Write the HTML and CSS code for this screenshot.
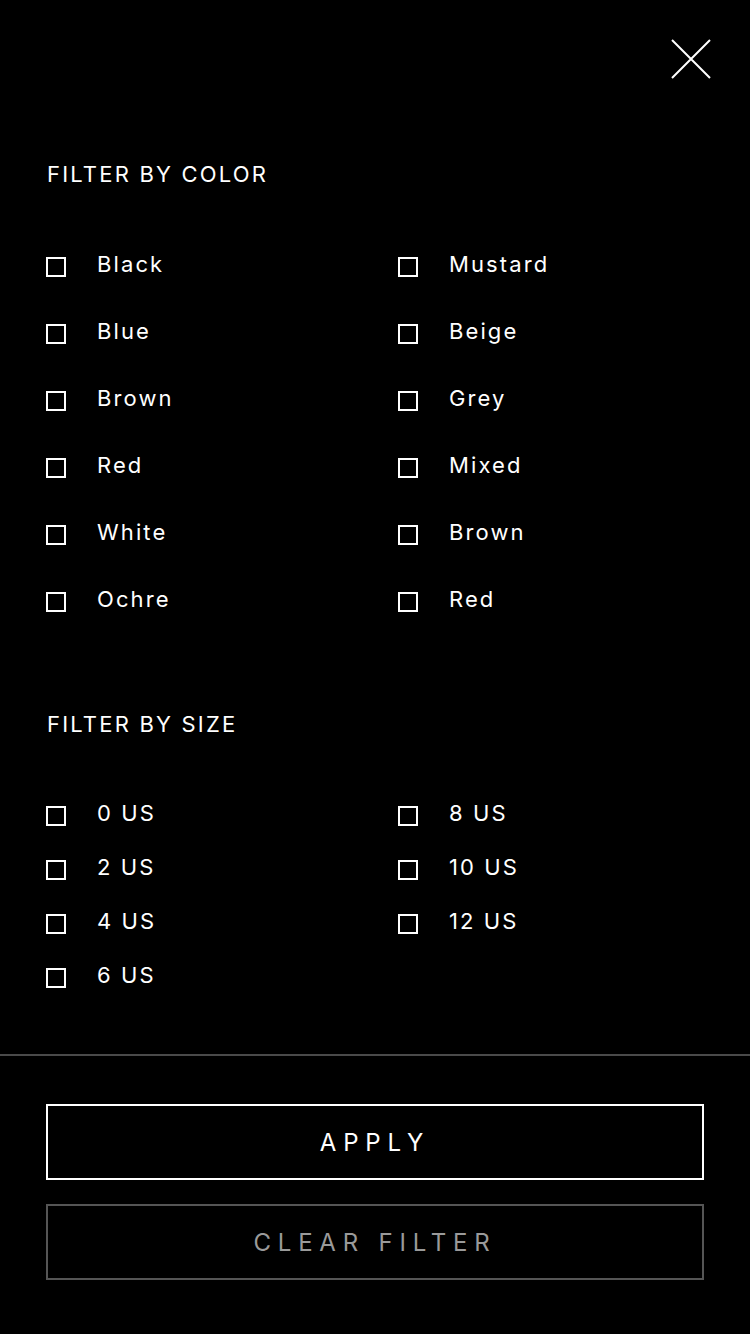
FILE: index.html
```html
<!DOCTYPE html>
<html lang="en">
<head>
<meta charset="utf-8">
<title>Filter</title>
<link rel="stylesheet" href="styles.css">
</head>
<body>
<div class="screen">
  <header class="top">
    <button class="close" aria-label="Close">
      <svg width="40" height="40" viewBox="0 0 40 40"><path d="M1 1 L39 39 M39 1 L1 39" stroke="#fff" stroke-width="2" fill="none"/></svg>
    </button>
  </header>

  <section class="group color">
    <h2 class="heading">FILTER BY COLOR</h2>
    <div class="grid rows-color">
      <label class="opt"><span class="box"></span><span class="txt">Black</span></label>
      <label class="opt"><span class="box"></span><span class="txt">Mustard</span></label>
      <label class="opt"><span class="box"></span><span class="txt">Blue</span></label>
      <label class="opt"><span class="box"></span><span class="txt">Beige</span></label>
      <label class="opt"><span class="box"></span><span class="txt">Brown</span></label>
      <label class="opt"><span class="box"></span><span class="txt">Grey</span></label>
      <label class="opt"><span class="box"></span><span class="txt">Red</span></label>
      <label class="opt"><span class="box"></span><span class="txt">Mixed</span></label>
      <label class="opt"><span class="box"></span><span class="txt">White</span></label>
      <label class="opt"><span class="box"></span><span class="txt">Brown</span></label>
      <label class="opt"><span class="box"></span><span class="txt">Ochre</span></label>
      <label class="opt"><span class="box"></span><span class="txt">Red</span></label>
    </div>
  </section>

  <section class="group size">
    <h2 class="heading">FILTER BY SIZE</h2>
    <div class="grid rows-size">
      <label class="opt"><span class="box"></span><span class="txt">0 US</span></label>
      <label class="opt"><span class="box"></span><span class="txt">8 US</span></label>
      <label class="opt"><span class="box"></span><span class="txt">2 US</span></label>
      <label class="opt"><span class="box"></span><span class="txt">10 US</span></label>
      <label class="opt"><span class="box"></span><span class="txt">4 US</span></label>
      <label class="opt"><span class="box"></span><span class="txt">12 US</span></label>
      <label class="opt"><span class="box"></span><span class="txt">6 US</span></label>
    </div>
  </section>

  <div class="divider"></div>

  <div class="actions">
    <button class="btn apply">APPLY</button>
    <button class="btn clear">CLEAR FILTER</button>
  </div>
</div>
</body>
</html>
```
FILE: styles.css
```css
* { box-sizing: border-box; }
html, body { margin: 0; padding: 0; background: #000; }
body {
  font-family: Inter, "Noto Sans", "Liberation Sans", sans-serif;
  color: #fff;
  width: 750px;
  height: 1334px;
  overflow: hidden;
}
.screen { display: flex; flex-direction: column; }
.top {
  display: flex;
  justify-content: flex-end;
  padding: 39px 39px 0 0;
  height: 160px;
}
.close {
  width: 40px; height: 40px;
  padding: 0; margin: 0;
  border: 0; background: none;
  display: block;
}
.close svg { display: block; }
.group { padding: 0 46px; }
.heading {
  margin: 0;
  font-weight: 400;
  font-size: 22px;
  line-height: 28px;
  letter-spacing: 2.2px;
  padding-left: 1px;
}
.grid {
  display: grid;
  grid-template-columns: 352px 1fr;
}
.rows-color { margin-top: 45px; grid-auto-rows: 67px; }
.rows-size { margin-top: 50px; grid-auto-rows: 54px; }
.size { margin-top: 75px; }
.opt {
  display: flex;
  align-items: center;
  gap: 31px;
}
.box {
  width: 20px; height: 20px;
  border: 2px solid #fff;
  flex: none;
  margin-top: 1px;
}
.txt {
  font-size: 22px;
  line-height: 28px;
  letter-spacing: 2.1px;
  margin-top: -5px;
}
.divider {
  margin-top: 50px;
  height: 2px;
  background: #4a4a4a;
}
.actions {
  padding: 48px 46px 0;
  display: flex;
  flex-direction: column;
  gap: 24px;
}
.btn {
  height: 76px;
  background: #000;
  font-family: inherit;
  font-size: 24px;
  letter-spacing: 6.8px;
  font-weight: 400;
  padding: 0;
}
.apply { border: 2px solid #fff; color: #fff; }
.clear { border: 2px solid #555; color: #9a9a9a; }
```
